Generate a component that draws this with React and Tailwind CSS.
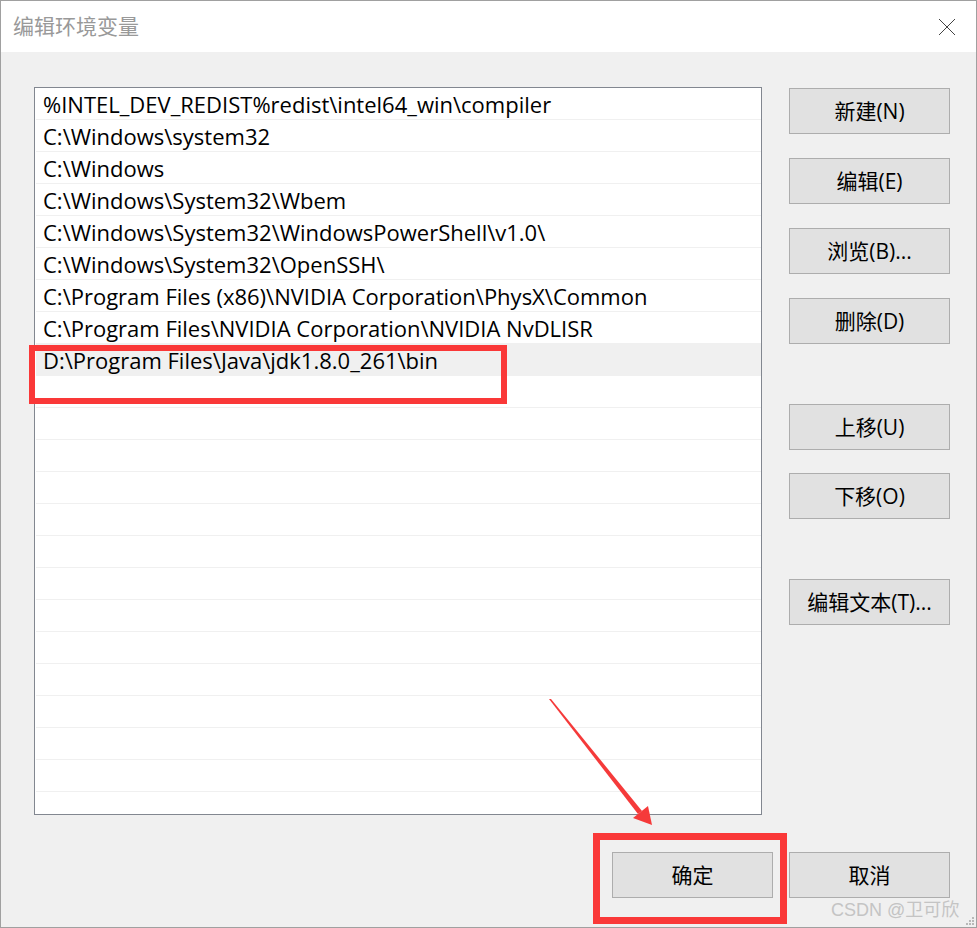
import React from 'react';

const paths = [
  '%INTEL_DEV_REDIST%redist\\intel64_win\\compiler',
  'C:\\Windows\\system32',
  'C:\\Windows',
  'C:\\Windows\\System32\\Wbem',
  'C:\\Windows\\System32\\WindowsPowerShell\\v1.0\\',
  'C:\\Windows\\System32\\OpenSSH\\',
  'C:\\Program Files (x86)\\NVIDIA Corporation\\PhysX\\Common',
  'C:\\Program Files\\NVIDIA Corporation\\NVIDIA NvDLISR',
  'D:\\Program Files\\Java\\jdk1.8.0_261\\bin',
];

const rows = [...paths, ...Array(14).fill('')];

const font = { fontFamily: '"Open Sans", "Noto Sans CJK SC", sans-serif' };

const WinButton = ({ children, className = '' }) => (
  <button
    className={`w-[161px] h-[46px] bg-[#e1e1e1] border border-[#adadad] text-[21px] text-black leading-none ${className}`}
  >
    {children}
  </button>
);

const App = () => {
  return (
    <div className="relative w-[977px] h-[928px] bg-[#f0f0f0] border border-[#a0a0a0] overflow-hidden" style={font}>
      {/* Title bar */}
      <div className="h-[51px] bg-white flex items-center justify-between pl-[12px] pr-[19px]">
        <span className="text-[21px] text-[#999999]">编辑环境变量</span>
        <svg width="18" height="18" viewBox="0 0 18 18" className="mr-[1px]">
          <path d="M1 1 L17 17 M17 1 L1 17" stroke="#444" strokeWidth="1" fill="none" />
        </svg>
      </div>

      {/* Body */}
      <div className="flex pl-[33px] pt-[35px]">
        <div className="w-[728px] h-[728px] bg-white border border-[#828790] overflow-hidden pl-[1px]">
          {rows.map((r, i) => (
            <div
              key={i}
              className={`h-[32px] border-b border-[#f0f0f0] pl-[7px] text-[22px] leading-[32px] text-black whitespace-nowrap ${i === 8 ? 'bg-[#f0f0f0]' : ''}`}
            >
              {r}
            </div>
          ))}
        </div>

        <div className="flex flex-col ml-[27px] pt-[1px]">
          <WinButton>新建(N)</WinButton>
          <WinButton className="mt-[24px]">编辑(E)</WinButton>
          <WinButton className="mt-[24px]">浏览(B)...</WinButton>
          <WinButton className="mt-[24px]">删除(D)</WinButton>
          <WinButton className="mt-[60px]">上移(U)</WinButton>
          <WinButton className="mt-[23px]">下移(O)</WinButton>
          <WinButton className="mt-[60px]">编辑文本(T)...</WinButton>
        </div>
      </div>

      {/* Bottom buttons */}
      <div className="flex justify-end gap-[16px] pr-[26px] mt-[37px]">
        <WinButton className="w-[160px]">确定</WinButton>
        <WinButton>取消</WinButton>
      </div>

      {/* Annotations */}
      <div className="absolute left-[28px] top-[344px] w-[478px] h-[59px] border-[6px] border-[#fa3838]" />
      <div className="absolute left-[592px] top-[832px] w-[194px] h-[91px] border-[7px] border-[#fa3838]" />
      <svg className="absolute left-0 top-0" width="977" height="928">
        <polygon points="548,698 550,698 641,810 637,813" fill="#f53a3a" />
        <polygon points="651,824 632,817 647,805" fill="#f53a3a" />
      </svg>

      <div className="absolute left-[830px] top-[896px] text-[18px] text-[#c4c4c4]" style={{ fontFamily: '"Liberation Sans", "Noto Sans CJK SC", sans-serif' }}>
        CSDN @卫可欣
      </div>
      <div className="absolute right-[2px] bottom-[2px] grid grid-cols-3 gap-[1px]">
        {[0, 0, 1, 0, 1, 1, 1, 1, 1].map((v, i) => (
          <span key={i} className={`w-[2px] h-[2px] ${v ? 'bg-[#b8b8b8]' : ''}`} />
        ))}
      </div>
    </div>
  );
};

export default App;
